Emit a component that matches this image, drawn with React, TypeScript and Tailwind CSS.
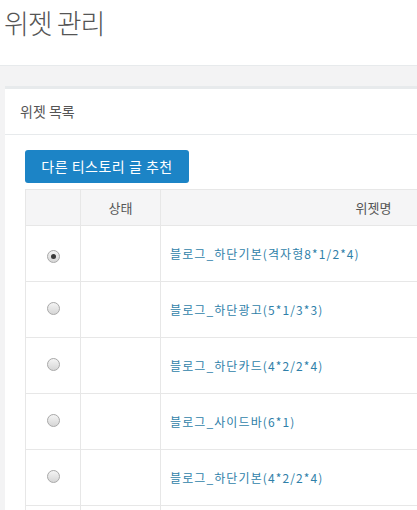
import React from 'react';

interface Widget {
  id: number;
  name: string;
  checked?: boolean;
}

const widgets: Widget[] = [
  { id: 1, name: '블로그_하단기본(격자형8*1/2*4)', checked: true },
  { id: 2, name: '블로그_하단광고(5*1/3*3)' },
  { id: 3, name: '블로그_하단카드(4*2/2*4)' },
  { id: 4, name: '블로그_사이드바(6*1)' },
  { id: 5, name: '블로그_하단기본(4*2/2*4)' },
  { id: 6, name: '' },
];

const Radio: React.FC<{ checked?: boolean }> = ({ checked }) => (
  <span className="inline-flex items-center justify-center w-[13px] h-[13px] rounded-full border border-[#a9a9a9] bg-gradient-to-b from-[#f4f4f4] to-[#d6d6d6]">
    {checked && <span className="block w-[5px] h-[5px] rounded-full bg-[#3a3a3a]" />}
  </span>
);

export default function App() {
  return (
    <div
      className="w-[417px] h-[510px] overflow-hidden bg-[#f3f3f4] text-[#676a6c]"
      style={{ fontFamily: '"Noto Sans CJK KR", "Noto Sans", sans-serif' }}
    >
      <div className="h-[66px] bg-white border-b border-[#e7eaec] pl-[4px] pt-[2px]">
        <h1 className="text-[27px] font-light leading-[42px] text-[#555] tracking-[-1px]">위젯 관리</h1>
      </div>

      <div className="pt-[20px] pl-[5px]">
        <div className="w-[800px] bg-white border-t-[3px] border-[#e7eaec]">
          <div className="h-[46px] px-[15px] flex items-center border-b border-[#e7eaec]">
            <span className="text-[14px] text-[#555]">위젯 목록</span>
          </div>
          <div className="px-[20px] pt-[15px]">
            <button className="h-[33px] w-[164px] rounded-[3px] bg-[#1c84c6] text-white text-[14px] tracking-[0.5px]">
              다른 티스토리 글 추천
            </button>
            <table className="mt-[6px] w-[562px] border-collapse text-[12px]">
              <thead>
                <tr className="h-[36px] bg-[#f5f5f6]">
                  <th className="w-[55px] border border-[#e7e7e7]" />
                  <th className="w-[80px] border border-[#e7e7e7] font-normal text-[13px] text-[#555]">상태</th>
                  <th className="border border-[#e7e7e7] font-normal text-[13px] text-[#555]">위젯명</th>
                </tr>
              </thead>
              <tbody>
                {widgets.map((w) => (
                  <tr key={w.id} className="h-[56px]">
                    <td className="border border-[#e7e7e7] text-center align-middle">
                      <Radio checked={w.checked} />
                    </td>
                    <td className="border border-[#e7e7e7]" />
                    <td className="border border-[#e7e7e7] pl-[9px] text-[#2f7fa9] tracking-[1.1px]">{w.name}</td>
                  </tr>
                ))}
              </tbody>
            </table>
          </div>
        </div>
      </div>
    </div>
  );
}
